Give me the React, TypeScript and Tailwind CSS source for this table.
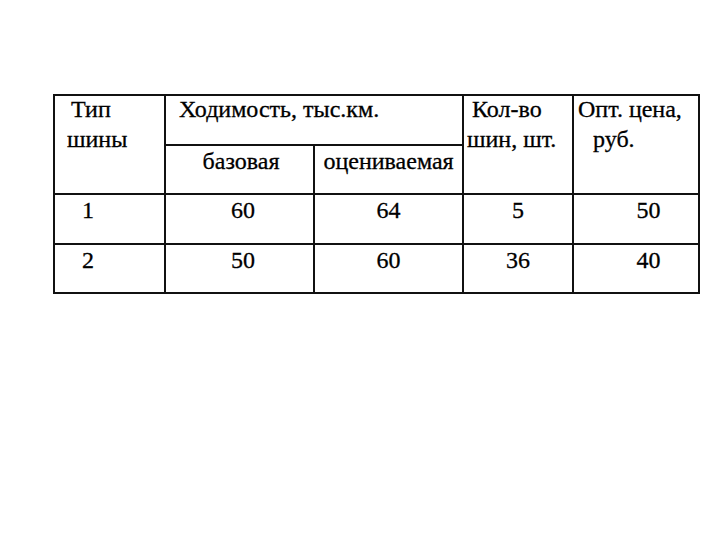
import React from "react";

export default function App() {
  const cell = "border-2 border-[#111] align-top p-0";
  return (
    <div className="w-[720px] h-[540px] bg-white pt-[94px] pl-[53px] font-['Liberation_Serif','Times_New_Roman',serif] text-[24px] leading-[30px] text-black [-webkit-text-stroke:0.3px_#000]">
      <table className="border-collapse table-fixed w-[645px]">
        <colgroup>
          <col className="w-[111px]" />
          <col className="w-[149px]" />
          <col className="w-[149px]" />
          <col className="w-[110px]" />
          <col className="w-[126px]" />
        </colgroup>
        <tbody>
          <tr className="h-[50px]">
            <td rowSpan={2} className={cell}>
              <div className="-mt-[2px]">
                <div className="pl-[16px]">Тип</div>
                <div className="pl-[12px]">шины</div>
              </div>
            </td>
            <td colSpan={2} className={cell}>
              <div className="-mt-[2px] pl-[13px]">Ходимость, тыс.км.</div>
            </td>
            <td rowSpan={2} className={cell}>
              <div className="-mt-[2px]">
                <div className="pl-[8px]">Кол-во</div>
                <div className="pl-[3px]">шин, шт.</div>
              </div>
            </td>
            <td rowSpan={2} className={cell}>
              <div className="-mt-[2px]">
                <div className="pl-[4px]">Опт. цена,</div>
                <div className="pl-[19px]">руб.</div>
              </div>
            </td>
          </tr>
          <tr className="h-[49px]">
            <td className={`${cell} text-center`}>
              <div className="pl-[3px]">базовая</div>
            </td>
            <td className={`${cell} text-center`}>оцениваемая</td>
          </tr>
          <tr className="h-[50px]">
            <td className={cell}>
              <div className="pl-[27px]">1</div>
            </td>
            <td className={`${cell} text-center`}>
              <div className="pl-[7px]">60</div>
            </td>
            <td className={`${cell} text-center`}>64</td>
            <td className={`${cell} text-center`}>5</td>
            <td className={`${cell} text-center`}>
              <div className="pl-[25px]">50</div>
            </td>
          </tr>
          <tr className="h-[49px]">
            <td className={cell}>
              <div className="pl-[27px]">2</div>
            </td>
            <td className={`${cell} text-center`}>
              <div className="pl-[7px]">50</div>
            </td>
            <td className={`${cell} text-center`}>60</td>
            <td className={`${cell} text-center`}>36</td>
            <td className={`${cell} text-center`}>
              <div className="pl-[25px]">40</div>
            </td>
          </tr>
        </tbody>
      </table>
    </div>
  );
}
